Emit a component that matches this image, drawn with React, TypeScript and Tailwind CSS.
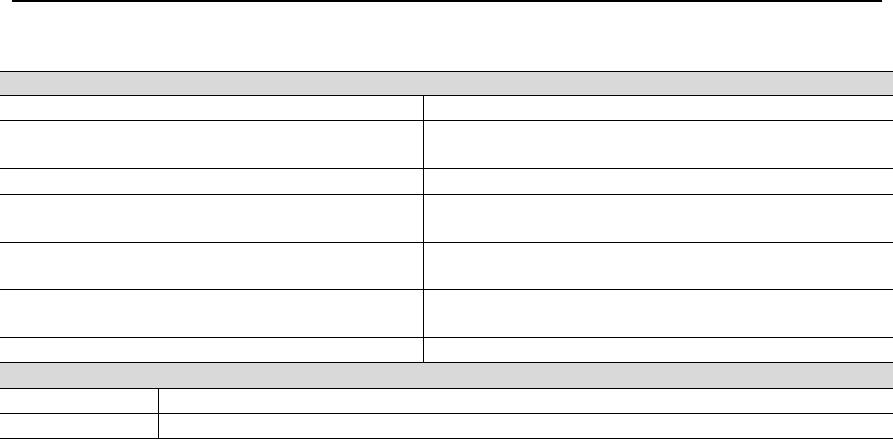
const rowsA = [24, 47, 25, 47, 46, 47, 24];
const rowsB = [24, 24];

const App = () => {
  return (
    <div className="w-[893px] h-[440px] bg-white font-['Liberation_Sans',sans-serif] text-black overflow-hidden">
      <div className="ml-[12px] w-[870px] h-[2px] bg-black" />
      <div className="h-[69px]" />
      <div className="border-t border-black">
        <div className="h-[24px] bg-[#d9d9d9] border-b border-black" />
        {rowsA.map((h, i) => (
          <div key={i} className="grid grid-cols-[424px_1fr] border-b border-black">
            <div className="border-r border-black" style={{ height: h }} />
            <div />
          </div>
        ))}
        <div className="h-[26px] bg-[#d9d9d9] border-b border-black" />
        {rowsB.map((h, i) => (
          <div key={i} className="grid grid-cols-[159px_1fr] border-b border-black">
            <div className="border-r border-black" style={{ height: h }} />
            <div />
          </div>
        ))}
      </div>
    </div>
  );
};

export default App;
